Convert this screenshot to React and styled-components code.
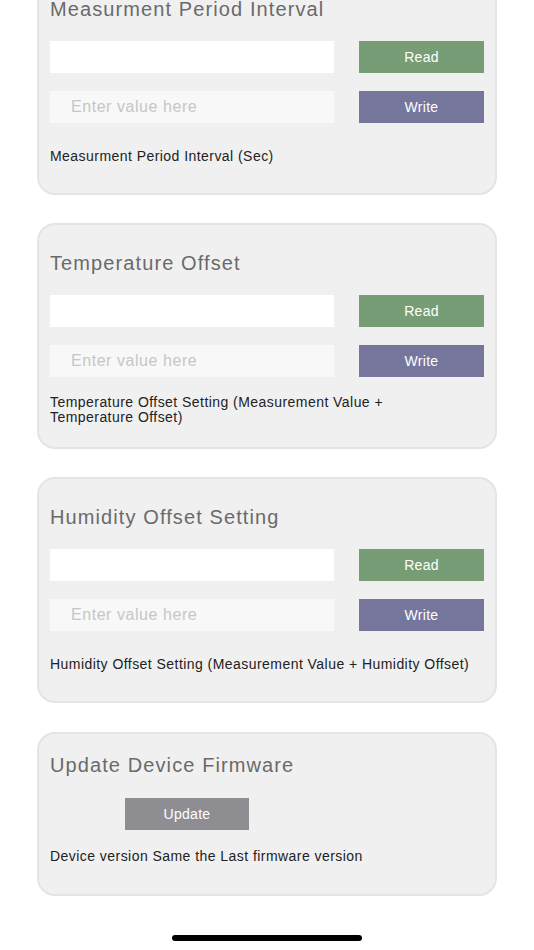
import React from "react";
import styled, { createGlobalStyle } from "styled-components";

const GlobalStyle = createGlobalStyle`
  html, body {
    margin: 0;
    padding: 0;
    background: #ffffff;
    font-family: "Liberation Sans", Arial, sans-serif;
    overflow: hidden;
  }
  * {
    box-sizing: border-box;
  }
`;

const settings = [
  {
    title: "Measurment Period Interval",
    desc: ["Measurment Period Interval (Sec)"],
  },
  {
    title: "Temperature Offset",
    desc: ["Temperature Offset Setting (Measurement Value +", "Temperature Offset)"],
  },
  {
    title: "Humidity Offset Setting",
    desc: ["Humidity Offset Setting (Measurement Value + Humidity Offset)"],
  },
];

function SettingCard({ title, desc }) {
  return (
    <Card>
      <Title>{title}</Title>
      <Row>
        <ValueInput type="text" readOnly />
        <ActionButton $color="#779d76">Read</ActionButton>
      </Row>
      <Row>
        <ValueInput type="text" placeholder="Enter value here" $muted />
        <ActionButton $color="#76769d">Write</ActionButton>
      </Row>
      <Description>
        <span>
          {desc.map((line, i) => (
            <React.Fragment key={i}>
              {i > 0 && <br />}
              {line}
            </React.Fragment>
          ))}
        </span>
      </Description>
    </Card>
  );
}

function App() {
  return (
    <>
      <GlobalStyle />
      <Page>
        {settings.map((s) => (
          <SettingCard key={s.title} title={s.title} desc={s.desc} />
        ))}
        <Card $compact>
          <Title $compact>Update Device Firmware</Title>
          <UpdateButton>Update</UpdateButton>
          <FirmwareNote>Device version Same the Last firmware version</FirmwareNote>
        </Card>
        <HomeIndicator />
      </Page>
    </>
  );
}

const Page = styled.div`
  display: flex;
  flex-direction: column;
  gap: 28px;
  padding: 0 37px;
  margin-top: -31px;
`;

const Card = styled.div`
  display: flex;
  flex-direction: column;
  background: #f0f0f0;
  border: 2px solid #e4e4e4;
  border-radius: 18px;
  margin-top: ${(p) => (p.$compact ? "1px" : "0")};
  padding: ${(p) => (p.$compact ? "20px 11px 30px" : "27px 11px 13px")};
`;

const Title = styled.div`
  font-size: 20px;
  line-height: 22px;
  letter-spacing: 1.1px;
  color: #6a6a6a;
  white-space: nowrap;
  margin-bottom: ${(p) => (p.$compact ? "22px" : "21px")};
`;

const Row = styled.div`
  display: flex;
  gap: 25px;
  height: 32px;

  & + & {
    margin-top: 18px;
  }
`;

const ValueInput = styled.input`
  flex: 0 0 284px;
  height: 32px;
  border: none;
  outline: none;
  background: ${(p) => (p.$muted ? "#f8f8f8" : "#ffffff")};
  padding: 0 0 0 21px;
  font-family: "Liberation Sans", Arial, sans-serif;
  font-size: 16px;
  letter-spacing: 0.55px;
  color: #222;

  &::placeholder {
    color: #c6c6c6;
  }
`;

const ActionButton = styled.button`
  flex: 1;
  height: 32px;
  border: none;
  background: ${(p) => p.$color};
  color: #ffffff;
  font-family: "Liberation Sans", Arial, sans-serif;
  font-size: 14px;
  letter-spacing: 0.3px;
  padding: 0;
`;

const Description = styled.div`
  height: 48px;
  margin-top: 9px;
  display: flex;
  align-items: center;
  font-size: 14px;
  line-height: 15px;
  letter-spacing: 0.45px;
  color: #222;
`;

const UpdateButton = styled.button`
  align-self: flex-start;
  margin-left: 75px;
  width: 124px;
  height: 32px;
  border: none;
  background: #8e8e92;
  color: #ffffff;
  font-family: "Liberation Sans", Arial, sans-serif;
  font-size: 14px;
  letter-spacing: 0.3px;
  padding: 0;
`;

const FirmwareNote = styled.div`
  margin-top: 18px;
  font-size: 14px;
  line-height: 16px;
  letter-spacing: 0.45px;
  color: #222;
`;

const HomeIndicator = styled.div`
  align-self: center;
  width: 190px;
  height: 6px;
  border-radius: 3px;
  background: #000;
  margin-top: 11px;
`;

export default App;
